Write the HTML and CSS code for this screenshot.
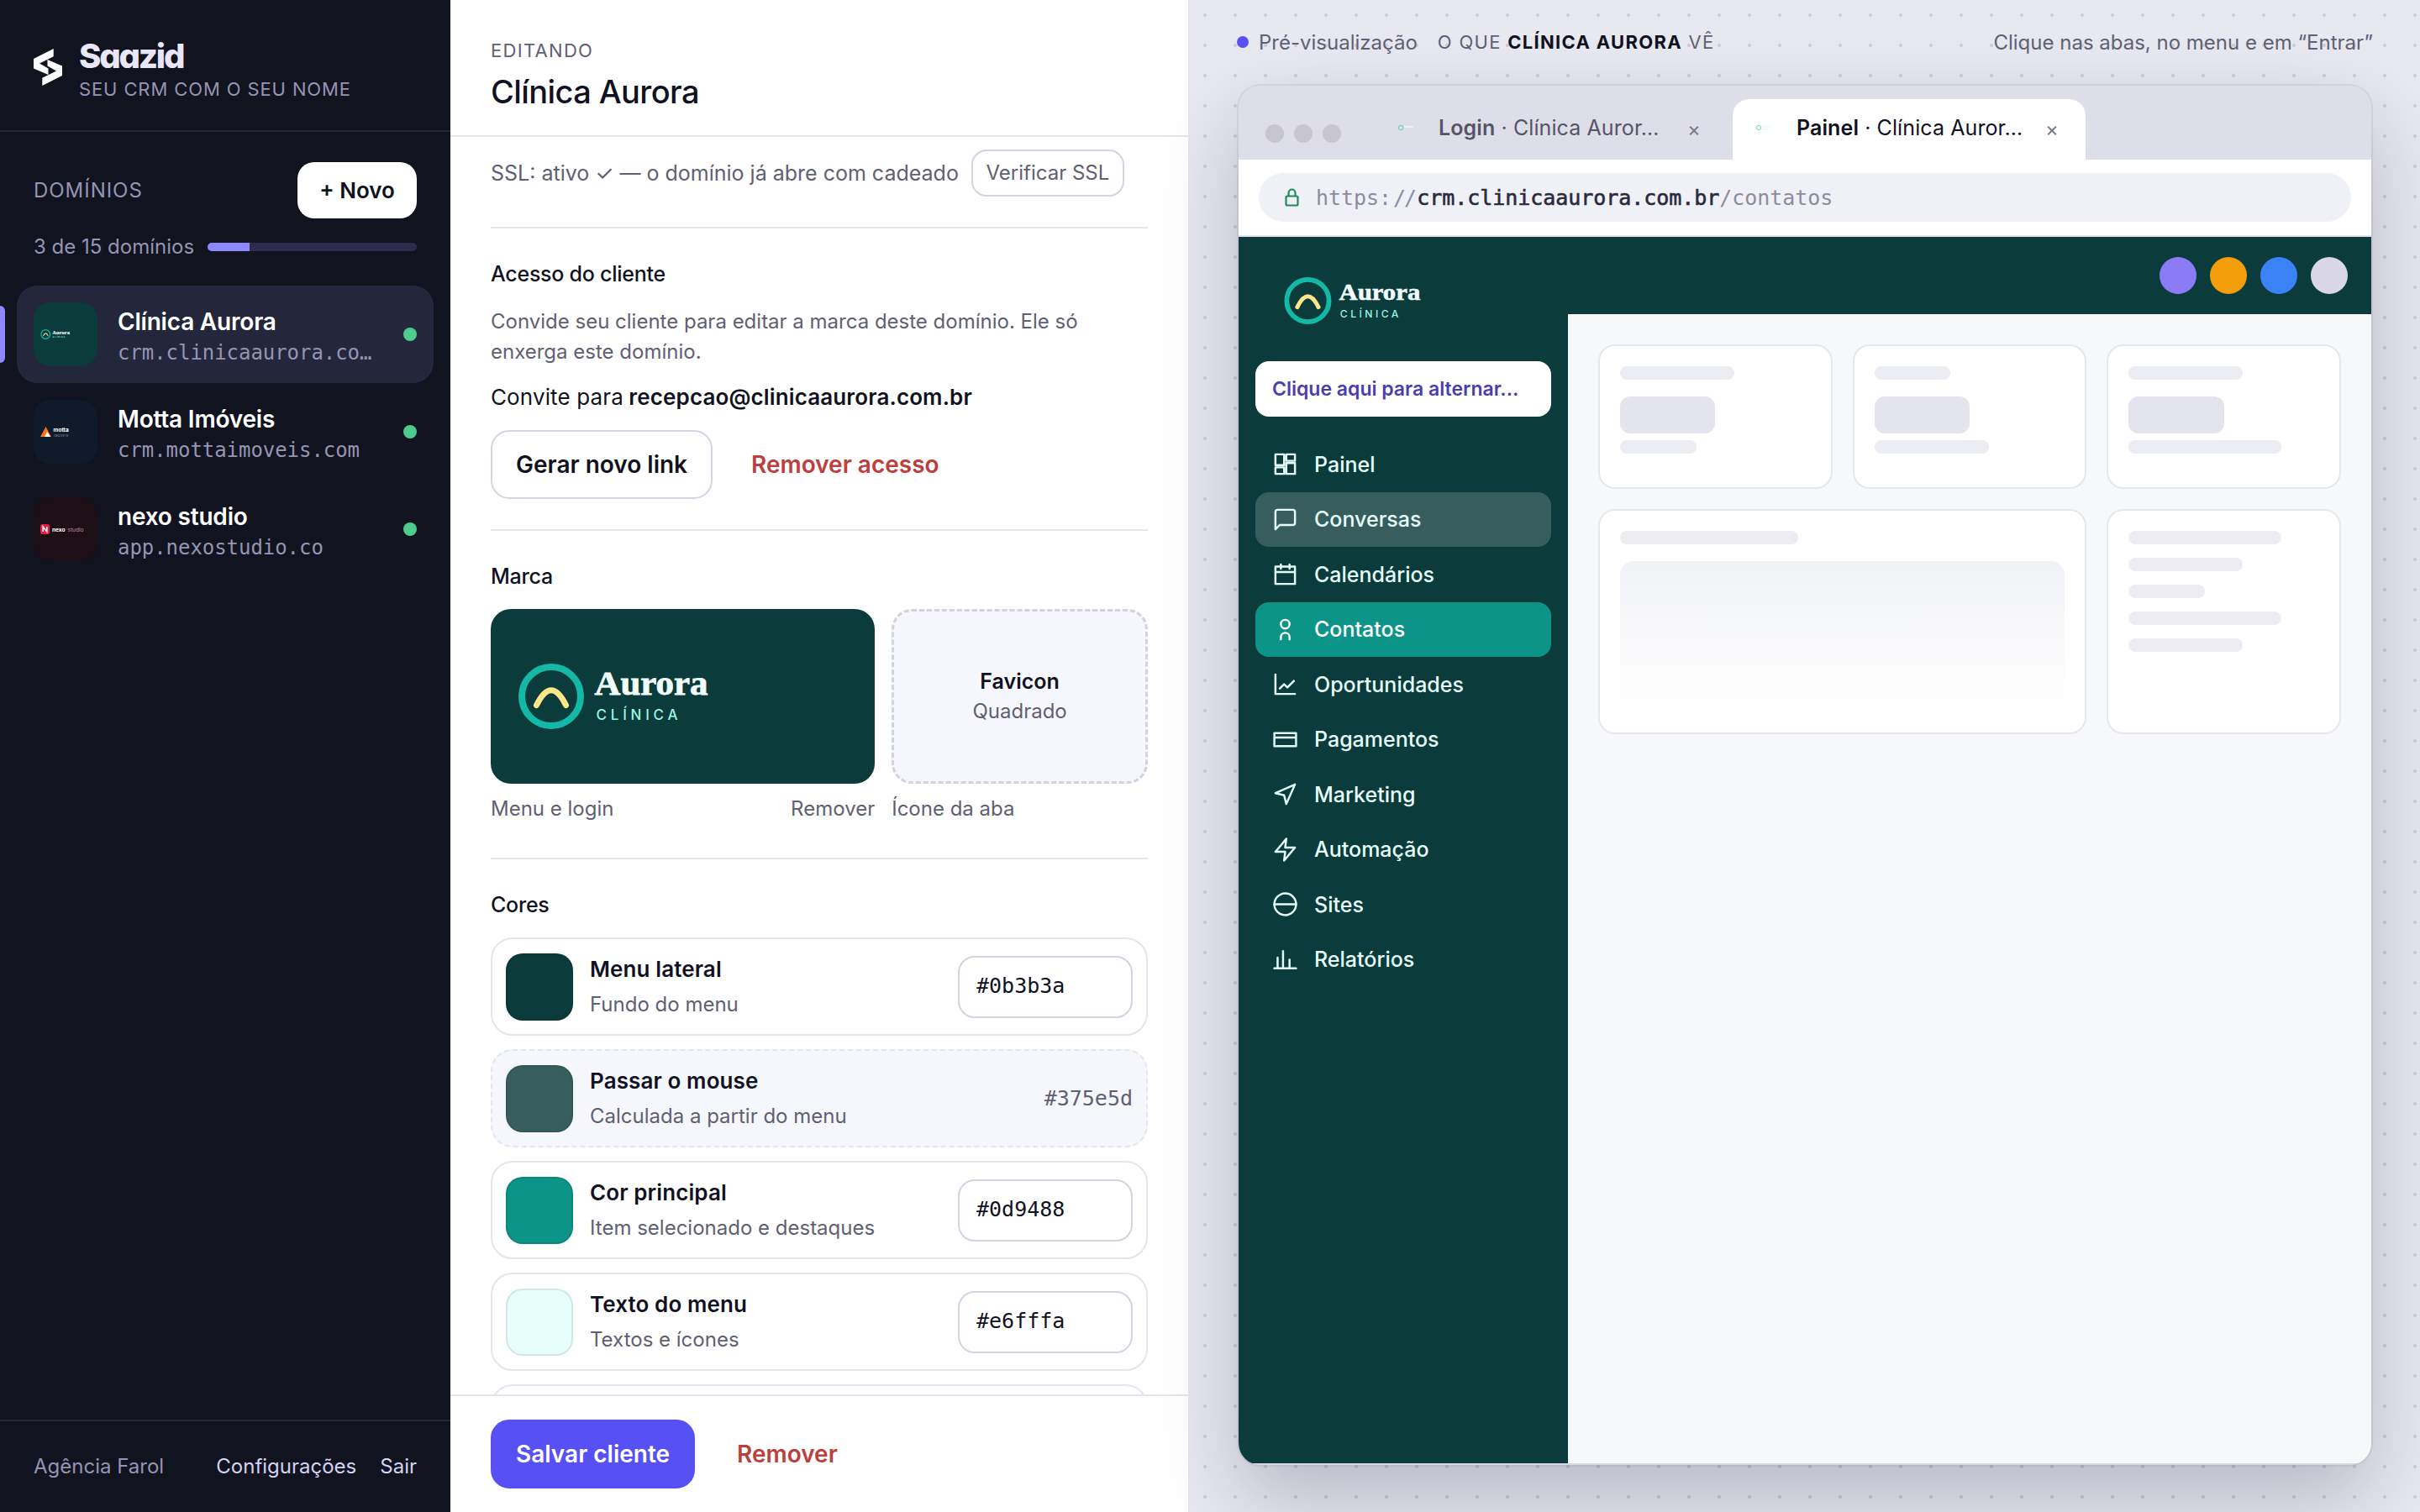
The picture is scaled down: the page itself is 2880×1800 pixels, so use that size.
FILE: index.html
```html
<!DOCTYPE html>
<html lang="pt-BR">
<head>
    <meta charset="UTF-8">
    <meta name="viewport" content="width=device-width, initial-scale=1.0">
    <title>Saazid</title>
    <link rel="stylesheet" href="styles.css">
</head>
<body>
    <!-- logo da Aurora, reutilizado no menu, nas abas e no cartão da marca -->
    <svg class="defs" aria-hidden="true">
        <symbol id="aurora" viewBox="0 0 230 78">
            <circle cx="39" cy="39" r="35" fill="none" stroke="#14b8a6" stroke-width="8"/>
            <path d="M21.500 49.500Q39 14 56.500 49.500" fill="none" stroke="#fde68a" stroke-width="7" stroke-linecap="round"/>
            <text x="90.500" y="37" class="aurora-name" textLength="135" lengthAdjust="spacingAndGlyphs">Aurora</text>
            <text x="92.500" y="66.500" class="aurora-sub" textLength="100">CLÍNICA</text>
        </symbol>
    </svg>

    <div class="app">
        <aside class="sidebar">
            <div class="brand">
                <svg class="brand-mark" viewBox="0 0 34 44" fill="#fff">
                    <path d="M23.7 0L0 12v11.5L17.5 31v-7.500L7 17.500l16.700-8.200z"/>
                    <path d="M10.300 44L34 32V20.500L16.500 13v7.500L27 26.500l-16.700 8.200z"/>
                </svg>
                <div>
                    <div class="brand-name">Saazid</div>
                    <div class="brand-sub">SEU CRM COM O SEU NOME</div>
                </div>
            </div>

            <div class="domains-head">
                <span class="domains-title">DOMÍNIOS</span>
                <button type="button" class="btn-new">+ Novo</button>
            </div>
            <div class="usage">
                <span>3 de 15 domínios</span>
                <div class="usage-bar"><div class="usage-fill" style="width: 20%"></div></div>
            </div>

            <div class="clients">
                <div class="client selected">
                    <div class="avatar avatar-aurora"><svg class="avatar-logo"><use href="#aurora"/></svg></div>
                    <div class="client-text">
                        <div class="client-name">Clínica Aurora</div>
                        <div class="client-domain">crm.clinicaaurora.com.br</div>
                    </div>
                    <span class="status"></span>
                </div>
                <div class="client">
                    <div class="avatar avatar-motta">
                        <svg width="60" height="14" viewBox="0 0 60 14">
                            <path d="M0 13L6.500 1L13 13z" fill="#f97316"/>
                            <path d="M5 13l3-6 4 6z" fill="#fff"/>
                            <text x="15.500" y="7" class="motta-name">motta</text>
                            <text x="16" y="12.500" class="motta-sub">IMÓVEIS</text>
                        </svg>
                    </div>
                    <div class="client-text">
                        <div class="client-name">Motta Imóveis</div>
                        <div class="client-domain">crm.mottaimoveis.com</div>
                    </div>
                    <span class="status"></span>
                </div>
                <div class="client">
                    <div class="avatar avatar-nexo">
                        <svg width="60" height="12" viewBox="0 0 60 12">
                            <rect width="11" height="12" rx="2.500" fill="#e11d48"/>
                            <path d="M3.200 9V3l4.600 6V3" fill="none" stroke="#fff" stroke-width="1.500"/>
                            <text x="14" y="8.500" class="nexo-name">nexo</text>
                            <text x="32.500" y="8.500" class="nexo-sub">studio</text>
                        </svg>
                    </div>
                    <div class="client-text">
                        <div class="client-name">nexo studio</div>
                        <div class="client-domain">app.nexostudio.co</div>
                    </div>
                    <span class="status"></span>
                </div>
            </div>

            <div class="sidebar-foot">
                <span class="agency">Agência Farol</span>
                <a>Configurações</a>
                <a>Sair</a>
            </div>
        </aside>

        <main class="editor">
            <header class="editor-head">
                <div class="eyebrow">EDITANDO</div>
                <h1>Clínica Aurora</h1>
            </header>

            <div class="editor-body">
                <div class="ssl">
                    <span>SSL: ativo ✓ — o domínio já abre com cadeado</span>
                    <button type="button" class="btn-small">Verificar SSL</button>
                </div>

                <section>
                    <h2>Acesso do cliente</h2>
                    <p class="hint">Convide seu cliente para editar a marca deste domínio. Ele só enxerga este domínio.</p>
                    <p class="invite">Convite para <b>recepcao@clinicaaurora.com.br</b></p>
                    <div class="actions">
                        <button type="button" class="btn btn-outline">Gerar novo link</button>
                        <button type="button" class="btn btn-danger">Remover acesso</button>
                    </div>
                </section>

                <section>
                    <h2>Marca</h2>
                    <div class="brand-grid">
                        <div>
                            <div class="drop drop-logo"><svg class="drop-img"><use href="#aurora"/></svg></div>
                            <div class="caption"><span>Menu e login</span><span>Remover</span></div>
                        </div>
                        <div>
                            <div class="drop drop-favicon"><b>Favicon</b><span>Quadrado</span></div>
                            <div class="caption"><span>Ícone da aba</span></div>
                        </div>
                    </div>
                </section>

                <section>
                    <h2>Cores</h2>
                    <div class="colors">
                        <div class="color">
                            <span class="swatch" style="background: #0b3b3a"></span>
                            <div class="color-text"><b>Menu lateral</b><span>Fundo do menu</span></div>
                            <input type="text" class="hex" value="#0b3b3a">
                        </div>
                        <div class="color color-auto">
                            <span class="swatch" style="background: #375e5d"></span>
                            <div class="color-text"><b>Passar o mouse</b><span>Calculada a partir do menu</span></div>
                            <span class="hex-auto">#375e5d</span>
                        </div>
                        <div class="color">
                            <span class="swatch" style="background: #0d9488"></span>
                            <div class="color-text"><b>Cor principal</b><span>Item selecionado e destaques</span></div>
                            <input type="text" class="hex" value="#0d9488">
                        </div>
                        <div class="color">
                            <span class="swatch" style="background: #e6fffa"></span>
                            <div class="color-text"><b>Texto do menu</b><span>Textos e ícones</span></div>
                            <input type="text" class="hex" value="#e6fffa">
                        </div>
                        <div class="color"></div>
                    </div>
                </section>
            </div>

            <footer class="editor-foot">
                <button type="button" class="btn btn-primary">Salvar cliente</button>
                <button type="button" class="btn btn-danger btn-remove">Remover</button>
            </footer>
        </main>

        <div class="stage">
            <div class="stage-head">
                <span class="live"></span>
                <span class="stage-label">Pré-visualização</span>
                <span class="stage-title">O QUE <b>CLÍNICA AURORA</b> VÊ</span>
                <span class="stage-tip">Clique nas abas, no menu e em “Entrar”</span>
            </div>

            <div class="window">
                <div class="tabs">
                    <div class="lights"><i></i><i></i><i></i></div>
                    <div class="tab">
                        <span class="favicon"><svg><use href="#aurora"/></svg></span>
                        <span class="tab-text"><b>Login</b> · Clínica Auror…</span>
                        <span class="tab-close">×</span>
                    </div>
                    <div class="tab active">
                        <span class="favicon"><svg><use href="#aurora"/></svg></span>
                        <span class="tab-text"><b>Painel</b> · Clínica Auror…</span>
                        <span class="tab-close">×</span>
                    </div>
                </div>
                <div class="address">
                    <div class="url">
                        <svg class="lock" viewBox="0 0 18 22"><rect x="1.500" y="9.500" width="14" height="11" rx="1.500"/><path d="M4.500 9.500V5.500a4 4 0 0 1 8 0v4"/></svg>
                        <span>https:<span class="slashes">//</span><b>crm.clinicaaurora.com.br</b>/contatos</span>
                    </div>
                </div>

                <div class="crm">
                    <nav class="menu">
                        <svg class="menu-logo"><use href="#aurora"/></svg>
                        <div class="switcher">Clique aqui para alternar...</div>
                        <a class="item"><svg viewBox="0 0 24 24"><path d="M3 3h8v10H3zM13 3h8v6h-8zM13 11h8v10h-8zM3 15h8v6H3z"/></svg>Painel</a>
                        <a class="item hover"><svg viewBox="0 0 24 24"><path d="M21 15a2 2 0 0 1-2 2H7l-4 4V5a2 2 0 0 1 2-2h14a2 2 0 0 1 2 2z"/></svg>Conversas</a>
                        <a class="item"><svg viewBox="0 0 24 24"><path d="M3 5h18v16H3zM3 10h18M8 3v4M16 3v4"/></svg>Calendários</a>
                        <a class="item current"><svg viewBox="0 0 24 24"><circle cx="12" cy="7" r="4"/><path d="M8 21v-2a4 4 0 0 1 8 0v2"/></svg>Contatos</a>
                        <a class="item"><svg viewBox="0 0 24 24"><path d="M3 3v18h18M7 16l4-4 3 3 6-6"/></svg>Oportunidades</a>
                        <a class="item"><svg viewBox="0 0 24 24"><path d="M2 6h20v12H2zM2 10h20"/></svg>Pagamentos</a>
                        <a class="item"><svg viewBox="0 0 24 24"><path d="M3 11l18-8-8 18-2-8z"/></svg>Marketing</a>
                        <a class="item"><svg viewBox="0 0 24 24"><path d="M13 2L3 14h9l-1 8 10-12h-9z"/></svg>Automação</a>
                        <a class="item"><svg viewBox="0 0 24 24"><circle cx="12" cy="12" r="10"/><path d="M2 12h20"/></svg>Sites</a>
                        <a class="item"><svg viewBox="0 0 24 24"><path d="M2 20h20M5 20V10M10 20V4M16 20v-8"/></svg>Relatórios</a>
                    </nav>
                    <div class="crm-main">
                        <div class="topbar">
                            <i class="violet"></i><i class="amber"></i><i class="blue"></i><i class="gray"></i>
                        </div>
                        <div class="panels">
                            <div class="panel"><div class="bar w60"></div><div class="number"></div><div class="bar w40"></div></div>
                            <div class="panel"><div class="bar w40"></div><div class="number"></div><div class="bar w60"></div></div>
                            <div class="panel"><div class="bar w60"></div><div class="number"></div><div class="bar w80"></div></div>
                            <div class="panel wide"><div class="bar w40"></div><div class="chart"></div></div>
                            <div class="panel"><div class="bar w80"></div><div class="bar w60"></div><div class="bar w40"></div><div class="bar w80"></div><div class="bar w60"></div></div>
                        </div>
                    </div>
                </div>
            </div>
        </div>
    </div>
</body>
</html>
```
FILE: styles.css
```css
* {
    box-sizing: border-box;
}

body {
    margin: 0;
    font-family: 'Inter', 'Liberation Sans', sans-serif;
    font-size: 24px;
    color: #11121f;
}

button, input {
    font: inherit;
    margin: 0;
}

h1, h2, p {
    margin: 0;
}

b {
    font-weight: 600;
}

svg, symbol {
    overflow: visible;
}

.defs {
    position: absolute;
    width: 0;
    height: 0;
}

.aurora-name {
    font: bold 39.5px 'Liberation Serif', serif;
    fill: #f0fdfa;
    stroke: #f0fdfa;
    stroke-width: 0.8;
}

.aurora-sub {
    font: 500 17px 'Inter', sans-serif;
    letter-spacing: 3px;
    fill: #99f6e4;
}

.app {
    display: flex;
    height: 100vh;
    overflow: hidden;
}

/* ---------- barra lateral ---------- */

.sidebar {
    width: 536px;
    flex: none;
    display: flex;
    flex-direction: column;
    background-color: #11131f;
    color: #9694b3;
}

.brand {
    display: flex;
    gap: 20px;
    height: 157px;
    padding: 45px 40px 0;
    border-bottom: 2px solid #232539;
}

.brand-mark {
    width: 34px;
    height: 44px;
    margin-top: 13px;
}

.brand-name {
    font-size: 40px;
    font-weight: 800;
    line-height: 44px;
    letter-spacing: -2.2px;
    font-feature-settings: 'cv11';
    color: #e9e6f7;
}

.brand-sub {
    font-size: 22px;
    line-height: 34px;
    letter-spacing: 0.88px;
}

.domains-head {
    display: flex;
    justify-content: space-between;
    align-items: center;
    padding: 36px 40px 0;
}

.domains-title {
    letter-spacing: 0.96px;
}

.btn-new {
    width: 142px;
    height: 67px;
    border: none;
    border-radius: 20px;
    background-color: white;
    color: #11121f;
    font-size: 26px;
    font-weight: 600;
    padding: 0;
}

.usage {
    display: flex;
    align-items: center;
    gap: 16px;
    line-height: 30px;
    padding: 19px 40px 31px;
}

.usage-bar {
    flex: 1;
    height: 10px;
    border-radius: 5px;
    background-color: #2f2b4e;
    overflow: hidden;
}

.usage-fill {
    height: 100%;
    background-color: #8f87ff;
}

.clients {
    flex: 1;
    padding: 0 20px;
}

.client {
    position: relative;
    display: flex;
    align-items: center;
    gap: 24px;
    height: 116px;
    padding: 0 20px;
    border-radius: 24px;
}

.client.selected {
    background-color: #24273b;
}

.client.selected::before {
    content: '';
    position: absolute;
    left: -20px;
    top: 24px;
    width: 6px;
    height: 68px;
    border-radius: 0 6px 6px 0;
    background-color: #8f87ff;
}

.avatar {
    display: flex;
    align-items: center;
    flex: none;
    width: 76px;
    height: 76px;
    padding-left: 8px;
    border-radius: 20px;
    overflow: hidden;
}

.avatar-aurora {
    background-color: #0b3b3a;
}

.avatar-motta {
    background-color: #0f1a2b;
}

.avatar-nexo {
    background-color: #1c0f16;
}

.avatar-logo {
    width: 36px;
    height: 12px;
}

.motta-name {
    font: bold 6.5px 'Inter', sans-serif;
    fill: white;
}

.motta-sub {
    font: 3.5px 'Inter', sans-serif;
    letter-spacing: 0.5px;
    fill: #94a3b8;
}

.nexo-name {
    font: bold 6.5px 'Inter', sans-serif;
    fill: white;
}

.nexo-sub {
    font: 6.5px 'Inter', sans-serif;
    fill: #c98a98;
}

.client-text {
    flex: 1;
    min-width: 0;
    padding-top: 5px;
}

.client-name {
    font-size: 28px;
    font-weight: 600;
    line-height: 34px;
    letter-spacing: -0.2px;
    color: white;
}

.client-domain {
    margin-top: 5px;
    font-family: 'DejaVu Sans Mono', monospace;
    font-size: 24px;
    line-height: 31px;
    letter-spacing: -0.05px;
    white-space: nowrap;
    overflow: hidden;
    text-overflow: ellipsis;
}

.status {
    width: 16px;
    height: 16px;
    border-radius: 50%;
    background-color: #4ecb8d;
}

.sidebar-foot {
    display: flex;
    align-items: center;
    height: 110px;
    padding: 0 40px 1px;
    border-top: 2px solid #232539;
}

.sidebar-foot a {
    margin-left: 28px;
    color: #d5d2f2;
}

.agency {
    flex: 1;
}

/* ---------- editor ---------- */

.editor {
    width: 880px;
    flex: none;
    display: flex;
    flex-direction: column;
    background-color: white;
    border-right: 2px solid #e4e5ed;
}

.editor-head {
    height: 163px;
    flex: none;
    padding: 46px 48px 0;
    border-bottom: 2px solid #e4e5eb;
}

.eyebrow {
    font-size: 22px;
    line-height: 28px;
    letter-spacing: 1.3px;
    color: #5f6073;
}

h1 {
    margin-top: 13px;
    font-size: 38px;
    font-weight: 500;
    line-height: 44px;
    letter-spacing: -0.6px;
}

.editor-body {
    flex: 1;
    min-height: 0;
    overflow: hidden;
    padding: 15px 48px 0;
}

.ssl {
    display: flex;
    align-items: center;
    gap: 15px;
    height: 56px;
    font-size: 25px;
    color: #5f6073;
    white-space: nowrap;
}

.ssl span {
    padding-bottom: 1px;
}

.btn-small {
    width: 182px;
    height: 56px;
    padding: 0 0 1px;
    border: 2px solid #d4d4e0;
    border-radius: 18px;
    background-color: white;
    font-size: 24px;
    color: #5f6073;
}

section {
    margin-top: 36px;
    padding-top: 38px;
    border-top: 2px solid #e4e5eb;
}

h2 {
    margin-bottom: 23px;
    font-size: 25px;
    font-weight: 500;
    line-height: 32px;
    letter-spacing: -0.25px;
}

.hint {
    line-height: 36px;
    color: #5f6073;
}

.invite {
    margin-top: 18px;
    font-size: 26px;
    line-height: 36px;
    letter-spacing: 0.13px;
}

.invite b {
    margin-left: -1px;
}

.actions {
    display: flex;
    gap: 14px;
    margin-top: 21px;
}

.btn {
    height: 82px;
    padding: 0 28px;
    border: 2px solid transparent;
    border-radius: 22px;
    background-color: transparent;
    font-size: 28px;
    font-weight: 600;
    white-space: nowrap;
}

.btn-outline {
    width: 264px;
    border-color: #d4d4e0;
    color: #11121f;
}

.btn-danger {
    padding: 0 30px;
    color: #bc3f3d;
}

.btn-primary {
    width: 243px;
    background-color: #5750f5;
    border-color: #5750f5;
    color: white;
}

.btn-remove {
    margin-left: 18px;
}

.brand-grid {
    display: grid;
    grid-template-columns: 3fr 2fr;
    gap: 20px;
    margin-bottom: 43px;
}

.brand-grid > div {
    min-width: 0;
}

.drop {
    height: 208px;
    border-radius: 24px;
    display: flex;
}

.drop-logo {
    align-items: center;
    padding-left: 33px;
    background-color: #0b3b3a;
}

.drop-img {
    width: 230px;
    height: 78px;
}

.drop-favicon {
    flex-direction: column;
    align-items: center;
    justify-content: center;
    line-height: 36px;
    border: 3px dashed #d2d3dd;
    background-color: #f6f7fc;
    color: #5f6073;
}

.drop-favicon b {
    font-size: 25px;
    color: #11121f;
}

.caption {
    display: flex;
    justify-content: space-between;
    margin-top: 14px;
    margin-bottom: -1px;
    line-height: 32px;
    color: #5f6073;
}

.colors {
    display: flex;
    flex-direction: column;
    gap: 16px;
}

.color {
    display: flex;
    align-items: center;
    gap: 20px;
    height: 117px;
    flex: none;
    padding: 0 16px;
    border: 2px solid #e4e5ed;
    border-radius: 26px;
}

.color-auto {
    border-style: dashed;
    background-color: #f6f7fc;
}

.swatch {
    width: 80px;
    height: 80px;
    border-radius: 20px;
    border: 2px solid rgba(17, 18, 31, 0.1);
}

.color-text {
    flex: 1;
}

.color-text b, .color-text span {
    display: block;
}

.color-text b {
    font-size: 26px;
    line-height: 39px;
    letter-spacing: 0.1px;
}

.color-text span {
    margin-top: 4px;
    line-height: 38px;
    color: #5f6073;
}

.hex, .hex-auto {
    font-family: 'DejaVu Sans Mono', monospace;
    font-size: 25px;
    color: #11121f;
}

.hex {
    width: 208px;
    height: 74px;
    padding: 0 20px 2px;
    border: 2px solid #d4d4e0;
    border-radius: 20px;
    background-color: white;
}

.hex-auto {
    color: #5f6073;
}

.editor-foot {
    display: flex;
    height: 140px;
    flex: none;
    padding-top: 28px;
    padding-left: 48px;
    border-top: 2px solid #e4e5ed;
}

/* ---------- pré-visualização ---------- */

.stage {
    flex: 1;
    min-width: 0;
    padding: 0 58px;
    background-color: #e8e8f1;
    background-image: radial-gradient(circle at 18px 18px, #cdcdd8 1.8px, transparent 2.3px);
    background-size: 36px 36px;
}

.stage-head {
    display: flex;
    align-items: center;
    height: 102px;
    margin: 0 -2px;
    padding-bottom: 2px;
    color: #5f6073;
    white-space: nowrap;
}

.live {
    width: 14px;
    height: 14px;
    margin-right: 12px;
    border-radius: 50%;
    background-color: #5750f5;
}

.stage-title {
    margin-left: 24px;
    font-size: 22px;
    letter-spacing: 1.3px;
}

.stage-title b {
    font-weight: 700;
    color: #11121f;
}

.stage-tip {
    margin-left: auto;
}

.window {
    height: 1642px;
    padding-bottom: 2px;
    display: flex;
    flex-direction: column;
    border-radius: 26px;
    overflow: hidden;
    background-color: #d3dae2;
    box-shadow: 0 0 0 2px rgba(17, 18, 34, 0.06), 0 40px 96px rgba(20, 20, 40, 0.22);
}

.tabs {
    display: flex;
    align-items: flex-end;
    gap: 6px;
    height: 88px;
    padding-left: 32px;
    background-color: #dedee8;
}

.lights {
    display: flex;
    gap: 12px;
    margin-right: 34px;
    margin-bottom: 20px;
}

.lights i {
    width: 22px;
    height: 22px;
    border-radius: 50%;
    background-color: #c6c5d0;
}

.tab {
    display: flex;
    align-items: center;
    width: 420px;
    height: 72px;
    padding: 0 32px 4px 28px;
    border-radius: 20px 20px 0 0;
    color: #565468;
    white-space: nowrap;
}

.tab.active {
    background-color: white;
    color: #11121f;
}

.favicon {
    display: flex;
    width: 32px;
    margin-right: 16px;
}

.favicon svg {
    width: 18px;
    height: 6px;
}

.tab-text {
    flex: 1;
    font-size: 25px;
    letter-spacing: 0.1px;
}

.tab-close {
    padding-top: 2px;
    font-size: 24px;
    color: #77758a;
}

.address {
    height: 92px;
    padding: 16px 24px;
    background-color: white;
    border-bottom: 2px solid #dfe5ea;
}

.url {
    display: flex;
    align-items: center;
    height: 58px;
    padding-left: 31px;
    border-radius: 29px;
    background-color: #f0f1f6;
    color: #8d8b9f;
    font-family: 'DejaVu Sans Mono', monospace;
    font-size: 25px;
    letter-spacing: -0.05px;
}

.url b {
    font-weight: 400;
    -webkit-text-stroke: 0.6px #2b2a3d;
    color: #2b2a3d;
}

/* aproxima as barras como na ligadura */
.slashes {
    margin: 0 2px 0 2px;
    letter-spacing: -2px;
}

.lock {
    width: 18px;
    height: 22px;
    margin-right: 19px;
    fill: none;
    stroke: #238a5c;
    stroke-width: 2.2;
}

.crm {
    flex: 1;
    display: flex;
}

.menu {
    width: 392px;
    padding: 48px 20px 0;
    background-color: #0b3b3a;
    color: #e6fffa;
}

.menu-logo {
    display: block;
    width: 166px;
    height: 56px;
    margin-left: 34px;
}

.switcher {
    height: 66px;
    margin: 44px 0 24.5px;
    padding-left: 20px;
    border-radius: 16px;
    background-color: white;
    color: #4a3eaf;
    font-size: 23px;
    font-weight: 600;
    line-height: 66px;
}

.item {
    display: flex;
    align-items: center;
    gap: 19.5px;
    height: 64.5px;
    margin-bottom: 1px;
    padding-left: 19.5px;
    border-radius: 16px;
    font-size: 25px;
    font-weight: 500;
}

.item svg {
    width: 31px;
    height: 31px;
    fill: none;
    stroke: currentColor;
    stroke-width: 1.9;
    stroke-linecap: round;
    stroke-linejoin: round;
}

.item.hover {
    background-color: #375e5d;
}

.item.current {
    background-color: #0d9488;
    color: white;
}

.crm-main {
    flex: 1;
    background-color: #f7f8fa;
}

.topbar {
    display: flex;
    justify-content: flex-end;
    align-items: center;
    gap: 16px;
    height: 92px;
    padding-right: 28px;
    background-color: #0b3b3a;
}

.topbar i {
    width: 44px;
    height: 44px;
    border-radius: 50%;
}

.violet { background-color: #8b7cf6; }
.amber { background-color: #f59e0b; }
.blue { background-color: #3b82f6; }
.gray { background-color: #d9d7e8; }

.panels {
    display: grid;
    grid-template-columns: repeat(3, 1fr);
    gap: 24px;
    padding: 36px;
}

.panel {
    padding: 24px;
    border: 2px solid #e6e7ed;
    border-radius: 20px;
    background-color: white;
}

.panel.wide {
    grid-column: span 2;
}

.bar {
    height: 16px;
    margin-bottom: 16px;
    border-radius: 8px;
    background-color: #ecedf2;
}

.w40 { width: 40%; }
.w60 { width: 60%; }
.w80 { width: 80%; }

.number {
    width: 50%;
    height: 44px;
    margin: 20px 0 8px;
    border-radius: 12px;
    background-color: #e3e4ed;
}

.chart {
    height: 180px;
    margin-top: 20px;
    border-radius: 16px;
    background: linear-gradient(#f1f2f6, white);
}
```
